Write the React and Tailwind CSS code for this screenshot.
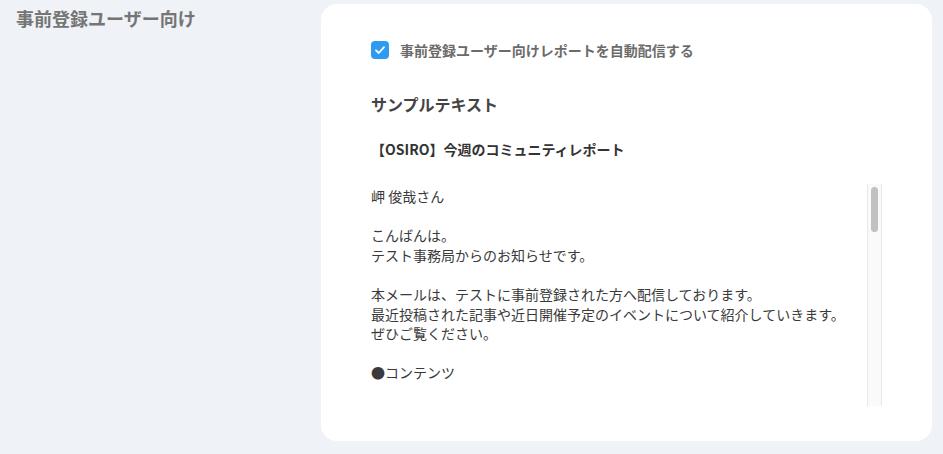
import React from 'react';

const bodyLines = [
  '岬 俊哉さん',
  '',
  'こんばんは。',
  'テスト事務局からのお知らせです。',
  '',
  '本メールは、テストに事前登録された方へ配信しております。',
  '最近投稿された記事や近日開催予定のイベントについて紹介していきます。',
  'ぜひご覧ください。',
  '',
  '●コンテンツ',
  '',
  '休日の過ごし方',
  '',
];

const App = () => {
  return (
    <div
      className="min-h-[454px] bg-[#eff2f7] flex"
      style={{ fontFamily: '"Noto Sans CJK JP", "Noto Sans", sans-serif' }}
    >
      {/* Left label */}
      <div className="w-[321px] shrink-0 pl-[16px] pt-[4px]">
        <h2 className="text-[18px] font-bold text-[#757575] leading-[28px]">事前登録ユーザー向け</h2>
      </div>

      {/* Card */}
      <div className="w-[611px] mt-[4px] mb-[13px] h-[437px] bg-white rounded-[16px] px-[50px] pt-[37px]">
        <label className="flex items-center gap-[11px]">
          <span className="w-[18px] h-[18px] rounded-[4px] bg-[#2e9bf0] flex items-center justify-center">
            <svg width="12" height="12" viewBox="0 0 12 12" fill="none">
              <path d="M2 6.3 L4.8 9 L10 3.2" stroke="white" strokeWidth="1.8" strokeLinecap="round" strokeLinejoin="round" />
            </svg>
          </span>
          <span className="text-[14px] leading-[18px] font-bold text-[#6b6b6b]">事前登録ユーザー向けレポートを自動配信する</span>
        </label>

        <h3 className="mt-[33px] text-[16px] leading-[24px] font-bold text-[#444]">サンプルテキスト</h3>

        <p className="mt-[23px] text-[14px] leading-[20px] font-bold text-[#333]">【OSIRO】今週のコミュニティレポート</p>

        <div className="mt-[25px] h-[222px] flex">
          <div className="flex-1 overflow-hidden pt-[3px] text-[14px] leading-[19.6px] text-[#3a3a3a]">
            {bodyLines.map((line, i) => (
              <div key={i} className="h-[19.6px] whitespace-nowrap">{line}</div>
            ))}
          </div>
          <div className="w-[15px] shrink-0 bg-[#fafafa] border-x border-[#e8e8e8] pt-[3px] flex justify-center">
            <div className="w-[7px] h-[45px] rounded-full bg-[#c1c1c1]" />
          </div>
        </div>
      </div>
    </div>
  );
};

export default App;
